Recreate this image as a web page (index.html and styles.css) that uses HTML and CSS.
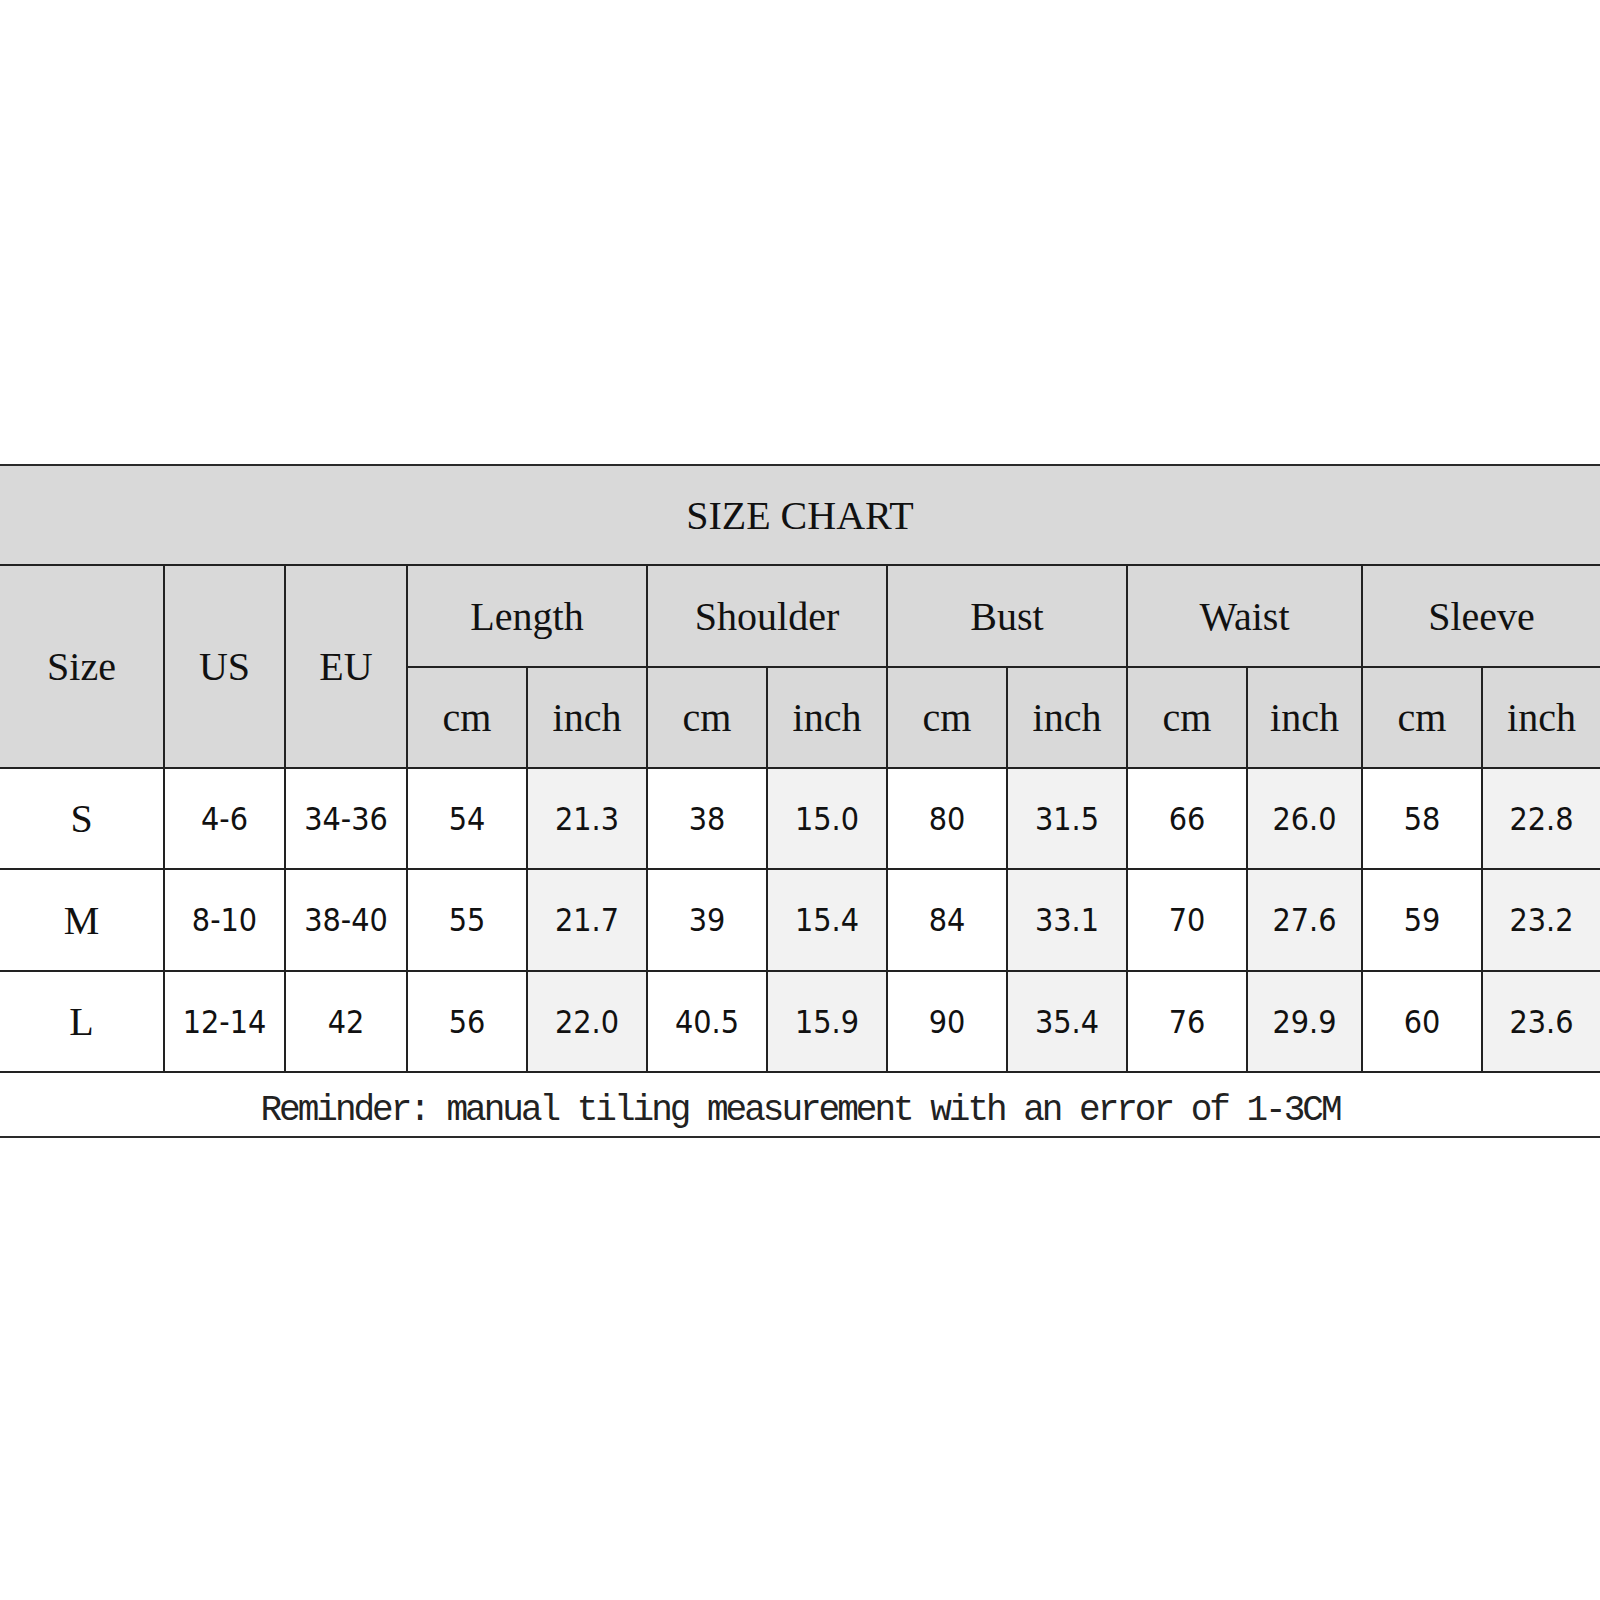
FILE: index.html
```html
<!DOCTYPE html>
<html lang="en">
<head>
<meta charset="utf-8">
<title>Size Chart</title>
<link rel="stylesheet" href="styles.css">
</head>
<body>
<main class="page">
  <div class="chart">
    <div class="cell title">SIZE CHART</div>

    <div class="cell head tall">Size</div>
    <div class="cell head tall">US</div>
    <div class="cell head tall">EU</div>
    <div class="cell head group">Length</div>
    <div class="cell head group">Shoulder</div>
    <div class="cell head group">Bust</div>
    <div class="cell head group">Waist</div>
    <div class="cell head group">Sleeve</div>

    <div class="cell head unit">cm</div>
    <div class="cell head unit">inch</div>
    <div class="cell head unit">cm</div>
    <div class="cell head unit">inch</div>
    <div class="cell head unit">cm</div>
    <div class="cell head unit">inch</div>
    <div class="cell head unit">cm</div>
    <div class="cell head unit">inch</div>
    <div class="cell head unit">cm</div>
    <div class="cell head unit">inch</div>

    <div class="cell label">S</div>
    <div class="cell num">4-6</div>
    <div class="cell num">34-36</div>
    <div class="cell num">54</div>
    <div class="cell num alt">21.3</div>
    <div class="cell num">38</div>
    <div class="cell num alt">15.0</div>
    <div class="cell num">80</div>
    <div class="cell num alt">31.5</div>
    <div class="cell num">66</div>
    <div class="cell num alt">26.0</div>
    <div class="cell num">58</div>
    <div class="cell num alt">22.8</div>

    <div class="cell label">M</div>
    <div class="cell num">8-10</div>
    <div class="cell num">38-40</div>
    <div class="cell num">55</div>
    <div class="cell num alt">21.7</div>
    <div class="cell num">39</div>
    <div class="cell num alt">15.4</div>
    <div class="cell num">84</div>
    <div class="cell num alt">33.1</div>
    <div class="cell num">70</div>
    <div class="cell num alt">27.6</div>
    <div class="cell num">59</div>
    <div class="cell num alt">23.2</div>

    <div class="cell label">L</div>
    <div class="cell num">12-14</div>
    <div class="cell num">42</div>
    <div class="cell num">56</div>
    <div class="cell num alt">22.0</div>
    <div class="cell num">40.5</div>
    <div class="cell num alt">15.9</div>
    <div class="cell num">90</div>
    <div class="cell num alt">35.4</div>
    <div class="cell num">76</div>
    <div class="cell num alt">29.9</div>
    <div class="cell num">60</div>
    <div class="cell num alt">23.6</div>

    <div class="cell reminder">Reminder: manual tiling measurement with an error of 1-3CM</div>
  </div>
</main>
</body>
</html>
```

FILE: styles.css
```css
html, body {
  margin: 0;
  padding: 0;
  background: #ffffff;
}

body {
  width: 1600px;
  height: 1600px;
  overflow: hidden;
}

.page {
  padding-top: 464px;
}

.chart {
  display: grid;
  grid-template-columns: 163px 119px 120px 118px 118px 118px 118px 118px 118px 118px 113px 118px 117px;
  grid-template-rows: 98px 100px 99px 99px 100px 99px 63px;
  gap: 2px;
  width: 1600px;
  background: #222222;
  border-top: 2px solid #2a2a2a;
  border-bottom: 2px solid #2a2a2a;
}

.cell {
  display: flex;
  align-items: center;
  justify-content: center;
  background: #ffffff;
  color: #111111;
}

.title,
.head,
.label {
  font-family: "Liberation Serif", "Times New Roman", serif;
  font-size: 40px;
}

.title {
  grid-column: 1 / -1;
  background: #d9d9d9;
}

.head {
  background: #d9d9d9;
}

.tall {
  grid-row: span 2;
}

.group {
  grid-column: span 2;
}

.num {
  font-family: "DejaVu Sans Condensed", "DejaVu Sans", sans-serif;
  font-stretch: condensed;
  font-size: 32px;
}

.alt {
  background: #f2f2f2;
}

.reminder {
  grid-column: 1 / -1;
  font-family: "Liberation Mono", "Courier New", monospace;
  font-size: 36px;
  letter-spacing: -3px;
  color: #222222;
  padding-top: 12px;
  box-sizing: border-box;
}
```
